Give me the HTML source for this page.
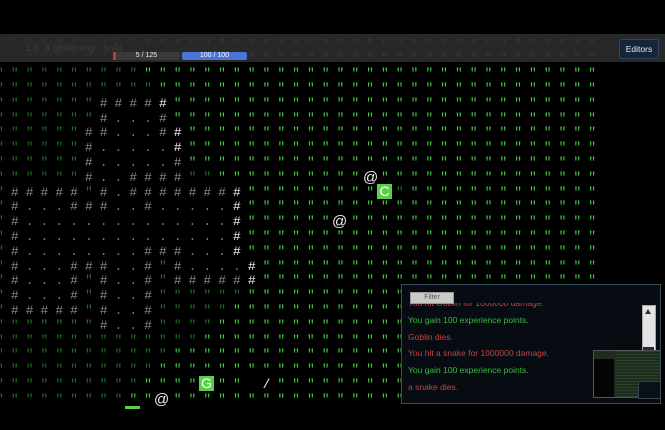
<!DOCTYPE html>
<html><head><meta charset="utf-8"><style>
html,body{margin:0;padding:0;width:665px;height:430px;background:#000;overflow:hidden;position:relative;font-family:"Liberation Sans",sans-serif}
#clip{position:absolute;left:0;top:0;width:601px;height:430px;overflow:hidden}
pre{position:absolute;left:-3.9px;top:37.6px;margin:0;font:13px/14.8px "Liberation Mono",monospace;letter-spacing:7px;white-space:pre;color:#3bbf3b}
.d{color:#236e23}.b{color:#45c945}.g{color:#8a8a8a}.w{color:#f2f2f2}.f{color:#777}
.box{position:absolute;background:#5ad04a;color:#fff;font:14px "Liberation Sans",sans-serif;text-align:center;line-height:15px;width:15px;height:15px}
.at{position:absolute;color:#eee;font:15px "Liberation Sans",sans-serif}
#bar{position:absolute;left:0;top:34px;width:665px;height:28px;background:rgba(44,44,44,0.9)}
</style></head><body>
<div id="clip"><pre><span class="d">""""""""""</span><span class="b">""""""""""""""""""""""""""""""""</span>
<span class="d">""""""""""</span><span class="b">""""""""""""""""""""""""""""""""</span>
<span class="d">""""""""""</span><span class="b">""""""""""""""""""""""""""""""""</span>
<span class="d">"""""""""""</span><span class="b">"""""""""""""""""""""""""""""""</span>
<span class="d">"""""""</span><span class="g">####</span><span class="w">#</span><span class="b">""""""""""""""""""""""""""""""</span>
<span class="d">"""""""</span><span class="g">#</span><span class="f">...</span><span class="g">#</span><span class="b">""""""""""""""""""""""""""""""</span>
<span class="d">""""""</span><span class="g">##</span><span class="f">...</span><span class="g">#</span><span class="w">#</span><span class="b">"""""""""""""""""""""""""""""</span>
<span class="d">""""""</span><span class="g">#</span><span class="f">.....</span><span class="w">#</span><span class="b">"""""""""""""""""""""""""""""</span>
<span class="d">""""""</span><span class="g">#</span><span class="f">.....</span><span class="g">#</span><span class="b">"""""""""""""""""""""""""""""</span>
<span class="d">""""""</span><span class="g">#</span><span class="f">..</span><span class="g">####</span><span class="d">""</span><span class="b">""""""""""</span> <span class="b">""""""""""""""""</span>
<span class="d">"</span><span class="g">#####</span><span class="d">"</span><span class="g">#</span><span class="f">.</span><span class="g">#######</span><span class="w">#</span><span class="b">"""""""""</span> <span class="d">"</span><span class="b">""""""""""""""</span>
<span class="d">"</span><span class="g">#</span><span class="f">...</span><span class="g">###</span><span class="f">..</span><span class="g">#</span><span class="f">.....</span><span class="w">#</span><span class="b">"""""""""""""""""""""""""</span>
<span class="d">"</span><span class="g">#</span><span class="f">..............</span><span class="w">#</span><span class="b">""""""</span> <span class="b">""""""""""""""""""</span>
<span class="d">"</span><span class="g">#</span><span class="f">..............</span><span class="w">#</span><span class="b">"""""""""""""""""""""""""</span>
<span class="d">"</span><span class="g">#</span><span class="f">........</span><span class="g">###</span><span class="f">...</span><span class="w">#</span><span class="b">"""""""""""""""""""""""""</span>
<span class="d">"</span><span class="g">#</span><span class="f">...</span><span class="g">###</span><span class="f">..</span><span class="g">#</span><span class="d">"</span><span class="g">#</span><span class="f">....</span><span class="w">#</span><span class="b">""""""""""""""""""""""""</span>
<span class="d">"</span><span class="g">#</span><span class="f">...</span><span class="g">#</span><span class="d">"</span><span class="g">#</span><span class="f">..</span><span class="g">#</span><span class="d">"</span><span class="g">#####</span><span class="w">#</span><span class="b">""""""""""""""""""""""""</span>
<span class="d">"</span><span class="g">#</span><span class="f">...</span><span class="g">#</span><span class="d">"</span><span class="g">#</span><span class="f">..</span><span class="g">#</span><span class="d">""""""</span><span class="b">"""""""""""""""""""""""""</span>
<span class="d">"</span><span class="g">#####</span><span class="d">"</span><span class="g">#</span><span class="f">..</span><span class="g">#</span><span class="d">"""""</span><span class="b">""""""""""""""""""""""""""</span>
<span class="d">"""""""</span><span class="g">#</span><span class="f">..</span><span class="g">#</span><span class="d">""""</span><span class="b">"""""""""""""""""""""""""""</span>
<span class="d">""""""""""""""</span><span class="b">""""""""""""""""""""""""""""</span>
<span class="d">""""""""""""</span><span class="b">""""""""""""""""""""""""""""""</span>
<span class="d">"""""""""""</span><span class="b">"""""""""""""""""""""""""""""""</span>
<span class="d">""""""""""</span><span class="b">""""</span> <span class="b">""</span> <span class="w">/</span><span class="b">"""""""""""""""""""""""</span>
<span class="d">"""""""""</span><span class="b">""</span> <span class="b">""""""""""""""""""""""""""""""</span></pre></div>
<div class="at" style="left:363px;top:169px">@</div>
<div class="box" style="left:377px;top:184px">C</div>
<div class="at" style="left:332px;top:213px">@</div>
<div class="box" style="left:199px;top:376px">G</div>
<div class="at" style="left:154px;top:391px">@</div>
<div style="position:absolute;left:125px;top:406px;width:15px;height:3px;background:#5ad04a"></div>

<div id="bar">
<div style="position:absolute;left:25px;top:9px;font-size:10px;color:#3c3c3c">1:8 &nbsp;a glistening &nbsp; sofa</div>
<div style="position:absolute;left:113px;top:18px;width:67px;height:8px;background:#3a3a3a;border-radius:2px;color:#eee;font-size:7px;line-height:8px;text-align:center">5 / 125</div>
<div style="position:absolute;left:113px;top:18px;width:3px;height:8px;background:#c33"></div>
<div style="position:absolute;left:182px;top:18px;width:65px;height:8px;background:#4a74d8;border-radius:2px;color:#fff;font-size:7px;line-height:8px;text-align:center">100 / 100</div>
<div style="position:absolute;left:619px;top:5px;width:38px;height:18px;background:#16263a;border:1px solid #34465a;border-radius:3px;color:#e8e8e8;font-size:8.5px;line-height:18px;text-align:center">Editors</div>
</div>

<div style="position:absolute;left:401px;top:284px;width:258px;height:118px;background:#070c13;border:1px solid #34505e;overflow:hidden">
<div style="position:absolute;left:6px;top:10px;font-size:8.5px;line-height:16.8px;clip-path:inset(8px 0 0 0)">
<div style="color:#c84040">You hit Goblin for 1000000 damage.</div>
<div style="color:#3cb83c">You gain 100 experience points.</div>
<div style="color:#c84040">Goblin dies.</div>
<div style="color:#c84040">You hit a snake for 1000000 damage.</div>
<div style="color:#3cb83c">You gain 100 experience points.</div>
<div style="color:#c84040">a snake dies.</div>
</div>
<div style="position:absolute;left:8px;top:7px;width:42px;height:10px;background:#c9c9c9;border:1px solid #999;color:#555;font-size:7px;line-height:10px;text-align:center">Filter</div>
<div style="position:absolute;left:240px;top:20px;width:12px;height:92px;background:#e4e4e4;border:1px solid #aaa"></div>
<div style="position:absolute;left:243px;top:24px;width:0;height:0;border-left:3px solid transparent;border-right:3px solid transparent;border-bottom:5px solid #333"></div>
<div style="position:absolute;left:241px;top:62px;width:11px;height:10px;background:#1e2e3e"></div>
<div style="position:absolute;left:191px;top:65px;width:66px;height:46px;background:#1e2c1e;border:1px solid #555">
<div style="position:absolute;left:0;top:8px;width:20px;height:38px;background:#050505"></div>
<div style="position:absolute;left:22px;top:0;width:44px;height:46px;background:repeating-linear-gradient(0deg,#2a402a 0 1px,#1e2c1e 1px 3px)"></div>
<div style="position:absolute;left:44px;top:30px;width:22px;height:16px;background:#0a1018;border:1px solid #345"></div>
</div>
</div>
</body></html>
